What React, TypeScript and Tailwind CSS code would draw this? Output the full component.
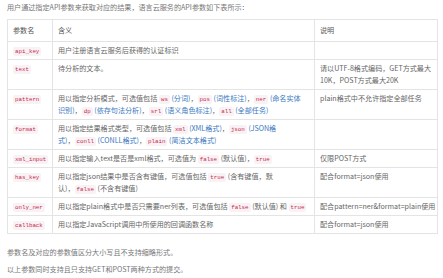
const C = ({ children }: { children: React.ReactNode }) => (
  <code className="font-['Liberation_Mono',monospace] text-[5.8px] leading-none text-[#c7254e] bg-[#f9f2f4] rounded-[2px] px-[2px] py-[1px]">
    {children}
  </code>
);

const B = ({ children }: { children: React.ReactNode }) => (
  <span className="text-[#3b78c0]">{children}</span>
);

const rows: { name: string; desc: React.ReactNode; note: React.ReactNode }[] = [
  { name: "api_key", desc: "用户注册语言云服务后获得的认证标识", note: "" },
  {
    name: "text",
    desc: "待分析的文本。",
    note: (
      <>
        请以UTF-8格式编码，GET方式最大
        <br />
        10K，POST方式最大20K
      </>
    ),
  },
  {
    name: "pattern",
    desc: (
      <>
        用以指定分析模式，可选值包括 <C>ws</C> <B>(分词)</B>，<C>pos</C> <B>(词性标注)</B>，<C>ner</C> <B>(命名实体</B>
        <br />
        <B>识别)</B>，<C>dp</C> <B>(依存句法分析)</B>，<C>srl</C> <B>(语义角色标注)</B>，<C>all</C> <B>(全部任务)</B>
      </>
    ),
    note: "plain格式中不允许指定全部任务",
  },
  {
    name: "format",
    desc: (
      <>
        用以指定结果格式类型，可选值包括 <C>xml</C> <B>(XML格式)</B>，<C>json</C> <B>(JSON格</B>
        <br />
        <B>式)</B>，<C>conll</C> <B>(CONLL格式)</B>，<C>plain</C> <B>(简洁文本格式)</B>
      </>
    ),
    note: "",
  },
  {
    name: "xml_input",
    desc: (
      <>
        用以指定输入text是否是xml格式，可选值为 <C>false</C> (默认值)，<C>true</C>
      </>
    ),
    note: "仅限POST方式",
  },
  {
    name: "has_key",
    desc: (
      <>
        用以指定json结果中是否含有键值，可选值包括 <C>true</C> (含有键值，默
        <br />
        认)，<C>false</C> (不含有键值)
      </>
    ),
    note: "配合format=json使用",
  },
  {
    name: "only_ner",
    desc: (
      <>
        用以指定plain格式中是否只需要ner列表，可选值包括 <C>false</C> (默认值) 和 <C>true</C>
      </>
    ),
    note: "配合pattern=ner&format=plain使用",
  },
  {
    name: "callback",
    desc: "用以指定JavaScript调用中所使用的回调函数名称",
    note: "配合format=json使用",
  },
];

export default function App() {
  return (
    <div className="w-[443px] h-[278px] bg-white px-[7px] pt-[1px] font-['Noto_Sans_CJK_SC','Noto_Sans',sans-serif] text-[7.1px] text-[#777] overflow-hidden">
      <p className="leading-[12px] mb-[6px]">用户通过指定API参数来获取对应的结果，语言云服务的API参数如下表所示：</p>
      <table className="table-fixed border-collapse w-[430px] text-[#666]">
        <colgroup>
          <col className="w-[45px]" />
          <col className="w-[262px]" />
          <col className="w-[123px]" />
        </colgroup>
        <thead>
          <tr className="text-[#555]">
            <th className="border border-[#e4e4e4] text-left font-normal px-[5px] py-[4px] leading-[12.5px]">参数名</th>
            <th className="border border-[#e4e4e4] text-left font-normal px-[5px] py-[4px] leading-[12.5px]">含义</th>
            <th className="border border-[#e4e4e4] text-left font-normal px-[5px] py-[4px] leading-[12.5px]">说明</th>
          </tr>
        </thead>
        <tbody>
          {rows.map((r) => (
            <tr key={r.name}>
              <td className="border border-[#e4e4e4] align-top px-[5px] py-[2.5px] leading-[12px]">
                <C>{r.name}</C>
              </td>
              <td className="border border-[#e4e4e4] align-top px-[5px] py-[2.5px] leading-[12px] whitespace-nowrap">
                {r.desc}
              </td>
              <td className="border border-[#e4e4e4] align-top px-[5px] py-[2.5px] leading-[12px] whitespace-nowrap">
                {r.note}
              </td>
            </tr>
          ))}
        </tbody>
      </table>
      <p className="leading-[12px] mt-[12px]">参数名及对应的参数值区分大小写且不支持缩略形式。</p>
      <p className="leading-[12px] mt-[5px]">以上参数同时支持且只支持GET和POST两种方式的提交。</p>
    </div>
  );
}
